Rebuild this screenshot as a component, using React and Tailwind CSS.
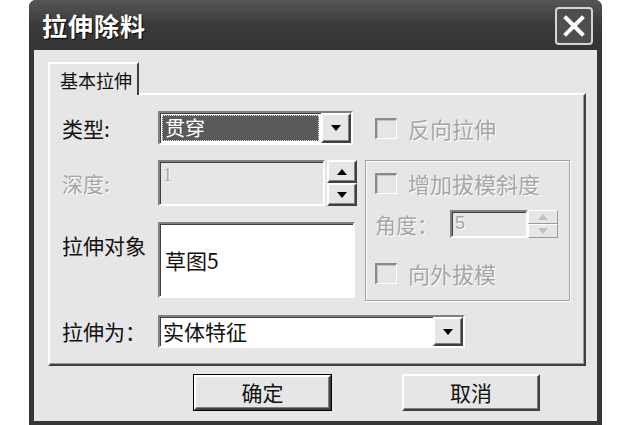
import React from 'react';

const raised =
  'border-2 border-t-white border-l-white border-b-[#404040] border-r-[#404040] shadow-[inset_-1px_-1px_0_#808080] bg-[#e6e6e6]';
const sunken =
  'border-2 border-t-[#808080] border-l-[#808080] border-b-white border-r-white shadow-[inset_1px_1px_0_#404040]';
const disabledText = 'text-[#a6a6a6] [text-shadow:1px_1px_0_#fff]';

function Arrow({ up = false, color = '#000' }) {
  return (
    <svg width="10" height="6" viewBox="0 0 10 6">
      {up ? <path d="M0 6 L5 0 L10 6 Z" fill={color} /> : <path d="M0 0 L10 0 L5 6 Z" fill={color} />}
    </svg>
  );
}

function DropButton() {
  return (
    <div className={`w-[30px] h-full flex items-center justify-center ${raised}`}>
      <Arrow />
    </div>
  );
}

function Spin({ color = '#000', flat = false }) {
  const btn = flat
    ? 'border border-t-white border-l-white border-b-[#9a9a9a] border-r-[#9a9a9a] bg-[#e6e6e6]'
    : raised;
  return (
    <div className="w-[30px] h-full flex flex-col">
      <div className={`flex-1 flex items-center justify-center ${btn}`}>
        <Arrow up color={color} />
      </div>
      <div className={`flex-1 flex items-center justify-center ${btn}`}>
        <Arrow color={color} />
      </div>
    </div>
  );
}

function CheckBox({ label, className = '' }) {
  return (
    <div className={`flex items-center ${className}`}>
      <div className="w-[22px] h-[21px] border-t-2 border-l-2 border-t-[#8a8a8a] border-l-[#8a8a8a] border-b border-r border-b-white border-r-white shadow-[inset_1px_1px_0_#c4c4c4]" />
      <span className={`ml-[11px] text-[22px] leading-[26px] whitespace-nowrap ${disabledText}`}>{label}</span>
    </div>
  );
}

export default function App() {
  return (
    <div className="w-[618px] h-[425px] bg-white flex font-['Noto_Sans_CJK_SC',sans-serif] overflow-hidden">
      <div className="ml-[29px] w-[573px] h-[425px] flex flex-col bg-[#363636] rounded-t-[7px] px-[5px] pb-[4px]">
        {/* Title bar */}
        <div className="h-[50px] flex items-center justify-between bg-gradient-to-b from-[#555] via-[#3a3a3a] to-[#343434] -mx-[5px] px-[13px] rounded-t-[7px]">
          <span className="text-white font-bold text-[25px] leading-none tracking-[1px] [text-shadow:1px_1px_1px_#000]">
            拉伸除料
          </span>
          <div className="w-[38px] h-[38px] -mr-[4px] mt-[1px] rounded-[4px] border-2 border-[#d4d4d4] bg-[#4e4e4e] flex items-center justify-center">
            <svg width="22" height="22" viewBox="0 0 22 22">
              <path d="M3 3 L19 19 M19 3 L3 19" stroke="#fff" strokeWidth="4" strokeLinecap="square" />
            </svg>
          </div>
        </div>

        {/* Body */}
        <div className="flex-1 bg-[#e6e6e6] pl-[14px] pt-[12px] flex flex-col">
          {/* Tab */}
          <div className="w-[91px] h-[33px] border-t-2 border-l-2 border-r-2 border-t-white border-l-white border-r-[#404040] bg-[#e6e6e6] flex items-center pl-[10px] text-[18px] leading-none whitespace-nowrap text-[#111] relative z-10 -mb-[2px]">
            基本拉伸
          </div>

          {/* Panel */}
          <div className="w-[538px] h-[273px] border-2 border-t-white border-l-white border-b-[#404040] border-r-[#404040] shadow-[inset_-1px_-1px_0_#9a9a9a] pl-[12px] pt-[16px] flex flex-col">
            {/* Row: 类型 */}
            <div className="flex items-center h-[34px]">
              <span className="w-[96px] text-[21px] leading-none text-[#111]">类型:</span>
              <div className={`w-[195px] h-[34px] flex bg-white ${sunken}`}>
                <div className="flex-1 m-[2px] bg-[#5a5a5a] border border-dotted border-[#e0e0e0] flex items-center pl-[2px] text-white text-[20px] leading-none">
                  贯穿
                </div>
                <DropButton />
              </div>
              <CheckBox label="反向拉伸" className="ml-[22px]" />
            </div>

            {/* Middle block */}
            <div className="flex mt-[15px]">
              <div className="w-[303px] flex flex-col">
                {/* 深度 */}
                <div className="flex items-center h-[46px]">
                  <span className={`w-[96px] text-[21px] leading-none ${disabledText}`}>深度:</span>
                  <div className="w-[199px] h-[46px] flex">
                    <div className={`flex-1 ${sunken} pl-[3px] pt-[2px] text-[18px] leading-[22px] ${disabledText} font-['Liberation_Serif',serif]`}>
                      1
                    </div>
                    <div className="ml-[2px] h-full">
                      <Spin />
                    </div>
                  </div>
                </div>
                {/* 拉伸对象 */}
                <div className="flex mt-[16px] h-[76px]">
                  <span className="w-[96px] mt-[11px] text-[21px] leading-[24px] text-[#111]">拉伸对象</span>
                  <div className={`w-[197px] h-[76px] bg-white ${sunken} flex items-center pl-[5px] text-[21px] leading-none text-[#111]`}>
                    草图5
                  </div>
                </div>
              </div>

              {/* Group box */}
              <div className="w-[205px] h-[141px] border border-[#a0a0a0] shadow-[inset_1px_1px_0_#fff,1px_1px_0_#fff] pl-[9px] pt-[9px] flex flex-col">
                <CheckBox label="增加拔模斜度" />
                <div className="flex items-center mt-[14px] h-[28px]">
                  <span className={`w-[75px] text-[21px] leading-none ${disabledText}`}>角度：</span>
                  <div className="w-[107px] h-[28px] flex">
                    <div className={`flex-1 ${sunken} pl-[3px] text-[18px] leading-[22px] ${disabledText} font-['Liberation_Sans',sans-serif]`}>
                      5
                    </div>
                    <div className="w-[29px] h-full">
                      <Spin color="#c0c0c0" flat />
                    </div>
                  </div>
                </div>
                <CheckBox label="向外拔模" className="mt-[22px]" />
              </div>
            </div>

            {/* Row: 拉伸为 */}
            <div className="flex items-center mt-[14px] h-[33px]">
              <span className="w-[96px] text-[21px] leading-none text-[#111]">拉伸为：</span>
              <div className={`w-[307px] h-[33px] flex bg-white ${sunken}`}>
                <div className="flex-1 flex items-center pl-[3px] text-[21px] leading-none text-[#111]">实体特征</div>
                <DropButton />
              </div>
            </div>
          </div>

          {/* Buttons */}
          <div className="flex mt-[8px]">
            <button className="ml-[145px] w-[139px] h-[37px] border border-black bg-[#e6e6e6] flex">
              <span className={`flex-1 flex items-center justify-center text-[21px] leading-none text-[#111] ${raised}`}>
                确定
              </span>
            </button>
            <button className={`ml-[70px] w-[138px] h-[37px] flex items-center justify-center text-[21px] leading-none text-[#111] ${raised}`}>
              取消
            </button>
          </div>
        </div>
      </div>
    </div>
  );
}
